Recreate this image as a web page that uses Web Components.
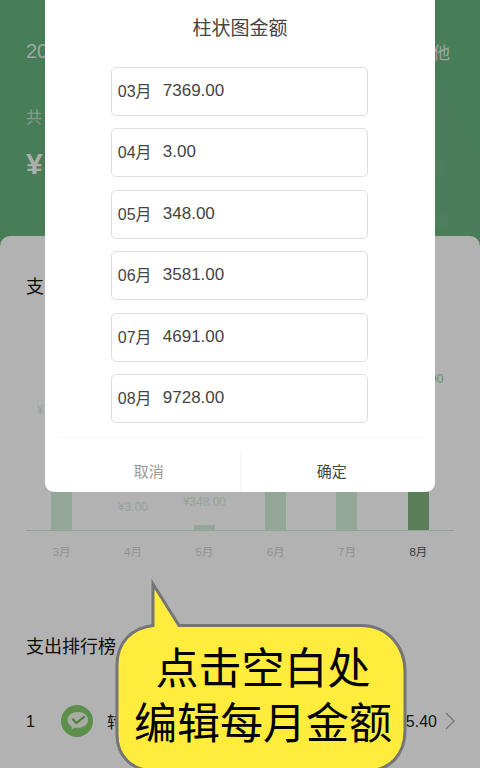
<!DOCTYPE html>
<html lang="zh">
<head>
<meta charset="utf-8">
<title>柱状图金额</title>
<style>
  html, body { margin: 0; padding: 0; }
  body { font-family: "Liberation Sans", "Noto Sans CJK SC", sans-serif; }
</style>
</head>
<body>
<x-screen>
  <x-header></x-header>
  <x-sheet>
    <x-heading>支</x-heading>
    <x-chart></x-chart>
    <x-heading style="margin-top:75px">支出排行榜</x-heading>
    <x-rank-row rank="1" name="转" amount="5.40"></x-rank-row>
  </x-sheet>
  <x-dialog heading="柱状图金额">
    <x-field month="03月" value="7369.00"></x-field>
    <x-field month="04月" value="3.00"></x-field>
    <x-field month="05月" value="348.00"></x-field>
    <x-field month="06月" value="3581.00"></x-field>
    <x-field month="07月" value="4691.00"></x-field>
    <x-field month="08月" value="9728.00"></x-field>
  </x-dialog>
  <x-bubble><div>点击空白处</div><div>编辑每月金额</div></x-bubble>
</x-screen>
<script>
const FONT = '"Liberation Sans", "Noto Sans CJK SC", sans-serif';
function define(name, css, html, init) {
  customElements.define(name, class extends HTMLElement {
    connectedCallback() {
      if (this.shadowRoot) return;
      const root = this.attachShadow({ mode: 'open' });
      const body = typeof html === 'function' ? html(this) : html;
      root.innerHTML = `<style>${css}</style>${body}`;
      if (init) init(this, root);
    }
  });
}

define('x-screen', `
  :host { display:flex; flex-direction:column; position:relative; width:480px; height:768px; overflow:hidden;
          background:#66b37d; font-family:${FONT}; }
`, `<slot></slot>`);

define('x-header', `
  :host { display:block; position:relative; height:236px; flex:none; color:#fff; box-sizing:border-box; padding:39px 30px 0 26px; }
  svg { position:absolute; left:0; top:0; width:480px; height:244px; }
  .top { position:relative; display:flex; justify-content:space-between; font-size:20px; line-height:24px; color:rgba(255,255,255,.82); }
  .top span:last-child { font-size:17px; position:relative; top:3px; }
  .sub { position:relative; margin-top:44px; font-size:16px; line-height:22px; color:rgba(255,255,255,.6); }
  .sum { position:relative; margin-top:19px; font-size:30px; line-height:32px; font-weight:700; color:rgba(255,255,255,.95); }
`, `
  <svg viewBox="0 0 480 244" aria-hidden="true">
    <path d="M380 78H440Q444 78 447 84L480 150V244H380Z" fill="#fff" fill-opacity=".035"/>
    <circle cx="437" cy="169" r="9" fill="#fff" fill-opacity=".04"/>
    <ellipse cx="440" cy="221" rx="9" ry="7" fill="#fff" fill-opacity=".04"/>
  </svg>
  <div class="top"><span>20</span><span>他</span></div>
  <div class="sub">共</div>
  <div class="sum">¥</div>
`);

define('x-sheet', `
  :host { display:block; flex:1; background:#fff; border-radius:10px 10px 0 0; padding-top:39px; overflow:hidden; color:#111; }
`, `<slot></slot>`);

define('x-heading', `
  :host { display:block; padding-left:26px; font-size:18px; line-height:24px; color:#111; }
`, `<slot></slot>`);

define('x-chart', `
  :host { display:block; margin:31px 26px 0; }
  .plot { display:grid; grid-template-columns:repeat(6,1fr); height:200px; align-items:end; border-bottom:1px solid #d6e8da; }
  .col { display:flex; flex-direction:column; align-items:center; }
  .val { font-size:12px; line-height:16px; margin-bottom:15px; color:#d8e8dc; white-space:nowrap; }
  .bar { width:21px; background:#d2f0d8; }
  .bar.on { background:#81b77f; }
  .col.on .val { color:#9ccaa5; }
  .months { display:grid; grid-template-columns:repeat(6,1fr); margin-top:13px; font-size:11.500px; line-height:16px; color:#d2d2d2; text-align:center; }
  .months .on { color:#555; }
`, () => {
  const data = [['3月',7369],['4月',3],['5月',348],['6月',3581],['7月',4691],['8月',9728]];
  const cols = data.map(([m,v],i) => `<div class="col ${i===5?'on':''}"><div class="val">¥${v.toFixed(2)}</div><div class="bar ${i===5?'on':''}" style="height:${(v*128/9728).toFixed(1)}px"></div></div>`).join('');
  const months = data.map(([m],i) => `<div class="${i===5?'on':''}">${m}</div>`).join('');
  return `<div class="plot">${cols}</div><div class="months">${months}</div>`;
});

define('x-rank-row', `
  :host { display:flex; align-items:center; height:40px; margin-top:42px; padding:0 25px 0 26px; font-size:16px; color:#222; }
  .rank { width:35px; padding-top:2px; }
  svg.icon { width:32px; height:32px; margin-right:14px; flex:none; }
  .name { flex:1; }
  .amt { padding-top:2px; }
  .chev { width:10px; height:18px; margin-left:8px; flex:none; }
`, el => `
  <span class="rank">${el.getAttribute('rank')}</span>
  <svg class="icon" viewBox="0 0 32 32" aria-hidden="true">
    <circle cx="16" cy="16" r="16" fill="#84cc6d"/>
    <path d="M17 7C11 7 6.500 10.500 6.500 15C6.500 17.800 8.300 20 10.800 21.400L10.500 24.500L14 22.500C15 22.700 16 22.800 17 22.800C23 22.800 27 19.500 27 15C27 10.500 23 7 17 7Z" fill="#eef6e8"/>
    <path d="M12 14.500L15.500 18L23 12" fill="none" stroke="#6fb257" stroke-width="2.200" stroke-linecap="round" stroke-linejoin="round"/>
  </svg>
  <span class="name">${el.getAttribute('name')}</span>
  <span class="amt">${el.getAttribute('amount')}</span>
  <svg class="chev" viewBox="0 0 10 18" aria-hidden="true"><path d="M1 1L9 9L1 17" fill="none" stroke="#aaa" stroke-width="1.300"/></svg>
`);

define('x-dialog', `
  :host { display:block; position:absolute; inset:0; background:rgba(0,0,0,.3); }
  .panel { width:390px; height:492px; margin-left:45px; background:#fff; border-radius:0 0 9px 9px; box-sizing:border-box;
           display:flex; flex-direction:column; }
  h2 { margin:0; padding-top:17px; font-weight:400; font-size:19px; line-height:24px; color:#444; text-align:center; }
  .fields { display:flex; flex-direction:column; gap:12.500px; margin-top:25.500px; padding:0 67.500px 0 66.300px; height:356.500px; box-sizing:border-box; }
  .foot { display:grid; grid-template-columns:1fr 1fr; margin:13.500px 12.500px 0; border-top:1px solid #f6f6f6; flex:1; }
  .btn { padding-top:14px; display:flex; }
  .btn span { flex:1; display:flex; align-items:center; justify-content:center; font-size:15px; color:#999; padding-bottom:3px; }
  .btn + .btn span { border-left:1px solid #f3f3f3; color:#444; }
`, el => `
  <div class="panel">
    <h2>${el.getAttribute('heading')}</h2>
    <div class="fields"><slot></slot></div>
    <div class="foot">
      <div class="btn"><span>取消</span></div>
      <div class="btn"><span>确定</span></div>
    </div>
  </div>
`);

define('x-field', `
  :host { display:flex; align-items:center; height:49px; box-sizing:border-box; border:1.500px solid #dedede; border-radius:5px;
          padding-left:5.500px; color:#444; }
  .m { width:45px; font-size:16px; line-height:20px; margin-top:1.500px; flex:none; white-space:nowrap; }
  .v { font-size:17px; line-height:20px; margin-top:-1px; }
`, el => `<span class="m">${el.getAttribute('month')}</span><span class="v">${el.getAttribute('value')}</span>`);

define('x-bubble', `
  :host { display:block; position:absolute; left:110px; top:575px; width:306px; height:200px; box-sizing:border-box;
          padding-top:66.500px; text-align:center; color:#000; font-size:43px; line-height:55px; }
  svg { position:absolute; left:0; top:0; width:306px; height:200px; }
  .t { position:relative; white-space:nowrap; }
`, `
  <svg viewBox="110 575 306 200" aria-hidden="true">
    <path d="M153 584L179 625.500H360C388 625.500 405 646 405 672V730C405 755 390 771 365 771H155C131 771 117 755 117 735V665C117 642 132 628 153 625.500Z"
      fill="#ffec3d" stroke="#757575" stroke-width="3" stroke-linejoin="miter"/>
  </svg>
  <div class="t"><slot></slot></div>
`);
</script>
</body>
</html>
